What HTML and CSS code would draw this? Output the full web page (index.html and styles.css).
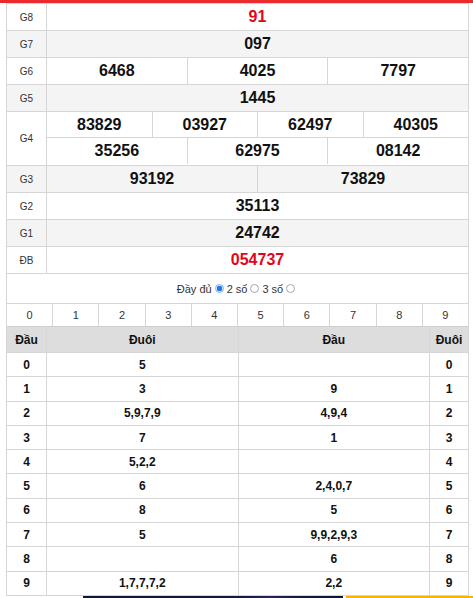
FILE: index.html
```html
<!DOCTYPE html>
<html lang="vi">
<head>
<meta charset="utf-8">
<link rel="stylesheet" href="styles.css">
</head>
<body>
<div class="topbar"></div>
<div class="wrap">
  <div class="kq">
    <div class="row"><div class="lbl">G8</div><div class="vals"><div class="v red">91</div></div></div>
    <div class="row alt"><div class="lbl">G7</div><div class="vals"><div class="v">097</div></div></div>
    <div class="row"><div class="lbl">G6</div><div class="vals"><div class="v">6468</div><div class="v">4025</div><div class="v">7797</div></div></div>
    <div class="row alt"><div class="lbl">G5</div><div class="vals"><div class="v">1445</div></div></div>
    <div class="row"><div class="lbl tall">G4</div>
      <div class="stack">
        <div class="vals sub"><div class="v">83829</div><div class="v">03927</div><div class="v">62497</div><div class="v">40305</div></div>
        <div class="vals"><div class="v">35256</div><div class="v">62975</div><div class="v">08142</div></div>
      </div>
    </div>
    <div class="row alt"><div class="lbl">G3</div><div class="vals"><div class="v">93192</div><div class="v">73829</div></div></div>
    <div class="row"><div class="lbl">G2</div><div class="vals"><div class="v">35113</div></div></div>
    <div class="row alt"><div class="lbl">G1</div><div class="vals"><div class="v">24742</div></div></div>
    <div class="row"><div class="lbl">ĐB</div><div class="vals"><div class="v red">054737</div></div></div>
  </div>

  <div class="opts">
    <span>Đầy đủ</span><input class="radio" type="radio" name="m" checked>
    <span>2 số</span><input class="radio" type="radio" name="m">
    <span>3 số</span><input class="radio" type="radio" name="m">
  </div>

  <div class="digits">
    <div class="d">0</div><div class="d">1</div><div class="d">2</div><div class="d">3</div><div class="d">4</div>
    <div class="d">5</div><div class="d">6</div><div class="d">7</div><div class="d">8</div><div class="d">9</div>
  </div>

  <div class="loto">
    <div class="lr head"><div class="c">Đầu</div><div class="c">Đuôi</div><div class="c">Đầu</div><div class="c">Đuôi</div></div>
    <div class="lr"><div class="c">0</div><div class="c">5</div><div class="c"></div><div class="c">0</div></div>
    <div class="lr"><div class="c">1</div><div class="c">3</div><div class="c">9</div><div class="c">1</div></div>
    <div class="lr"><div class="c">2</div><div class="c">5,9,7,9</div><div class="c">4,9,4</div><div class="c">2</div></div>
    <div class="lr"><div class="c">3</div><div class="c">7</div><div class="c">1</div><div class="c">3</div></div>
    <div class="lr"><div class="c">4</div><div class="c">5,2,2</div><div class="c"></div><div class="c">4</div></div>
    <div class="lr"><div class="c">5</div><div class="c">6</div><div class="c">2,4,0,7</div><div class="c">5</div></div>
    <div class="lr"><div class="c">6</div><div class="c">8</div><div class="c">5</div><div class="c">6</div></div>
    <div class="lr"><div class="c">7</div><div class="c">5</div><div class="c">9,9,2,9,3</div><div class="c">7</div></div>
    <div class="lr"><div class="c">8</div><div class="c"></div><div class="c">6</div><div class="c">8</div></div>
    <div class="lr"><div class="c">9</div><div class="c">1,7,7,7,2</div><div class="c">2,2</div><div class="c">9</div></div>
  </div>
</div>
<div class="banner"><div class="dark"></div><div class="yellow"></div></div>
</body>
</html>
```
FILE: styles.css
```css
* { box-sizing: border-box; }
html, body { margin: 0; padding: 0; background: #fff; }
body {
  font-family: "Liberation Sans", Arial, sans-serif;
  color: #222;
  overflow: hidden;
}
.topbar { height: 3px; background: #ea2a2f; }
.wrap {
  margin-left: 6px;
  width: 463px;
  border-left: 1px solid #d6d6d6;
  border-right: 1px solid #d6d6d6;
}
.kq { border-top: 1px solid #d6d6d6; }
.row {
  display: flex;
  border-bottom: 1px solid #d6d6d6;
  background: #fff;
}
.row.alt { background: #f4f4f4; }
.lbl {
  width: 40px;
  flex: none;
  height: 26px;
  border-right: 1px solid #d6d6d6;
  display: flex;
  align-items: center;
  justify-content: center;
  font-size: 10px;
  color: #333;
}
.lbl.tall { height: 53px; }
.stack { flex: 1; display: flex; flex-direction: column; }
.vals { flex: 1; display: flex; height: 26px; }
.vals.sub { border-bottom: 1px solid #d6d6d6; flex: none; }
.stack .vals { flex: none; }
.v {
  flex: 1 1 0;
  display: flex;
  align-items: center;
  justify-content: center;
  font-size: 16px;
  font-weight: bold;
  color: #111;
}
.v + .v { border-left: 1px solid #d6d6d6; }
.v.red { color: #e3061b; }

.opts {
  height: 29px;
  display: flex;
  align-items: center;
  justify-content: center;
  font-size: 11px;
  color: #333;
}
.radio {
  appearance: none;
  -webkit-appearance: none;
  width: 9px;
  height: 9px;
  margin: 0 3px;
  border: 1px solid #a8a8a8;
  border-radius: 50%;
  background: #fff;
}
.radio:checked {
  border: 1px solid #7fb3f0;
  background: radial-gradient(circle, #1e78e6 0 2.6px, #dbe9fb 3px);
}

.digits {
  display: flex;
  border-top: 1px solid #d6d6d6;
  border-bottom: 1px solid #cfcfcf;
}
.d {
  flex: 1 1 0;
  height: 22px;
  display: flex;
  align-items: center;
  justify-content: center;
  font-size: 11px;
  color: #333;
}
.d + .d { border-left: 1px solid #d6d6d6; }

.loto { border-bottom: 1px solid #d6d6d6; }
.lr {
  display: grid;
  grid-template-columns: 39px 1fr 1fr 39px;
  height: 24.3px;
  border-bottom: 1px solid #d6d6d6;
}
.lr:last-child { border-bottom: 0; height: 23.3px; }
.lr.head { background: #dddddd; height: 26px; }
.c {
  display: flex;
  align-items: center;
  justify-content: center;
  font-size: 12px;
  font-weight: bold;
  color: #111;
}
.c + .c { border-left: 1px solid #d6d6d6; }

.banner {
  display: flex;
  gap: 3px;
  margin-left: 83px;
  height: 20px;
}
.dark {
  width: 260px;
  background: linear-gradient(90deg, #0e1733 0%, #141a3a 60%, #2a2258 72%, #101a3a 85%, #0d1630 100%);
}
.yellow { flex: 1; background: #f7b500; }
```
